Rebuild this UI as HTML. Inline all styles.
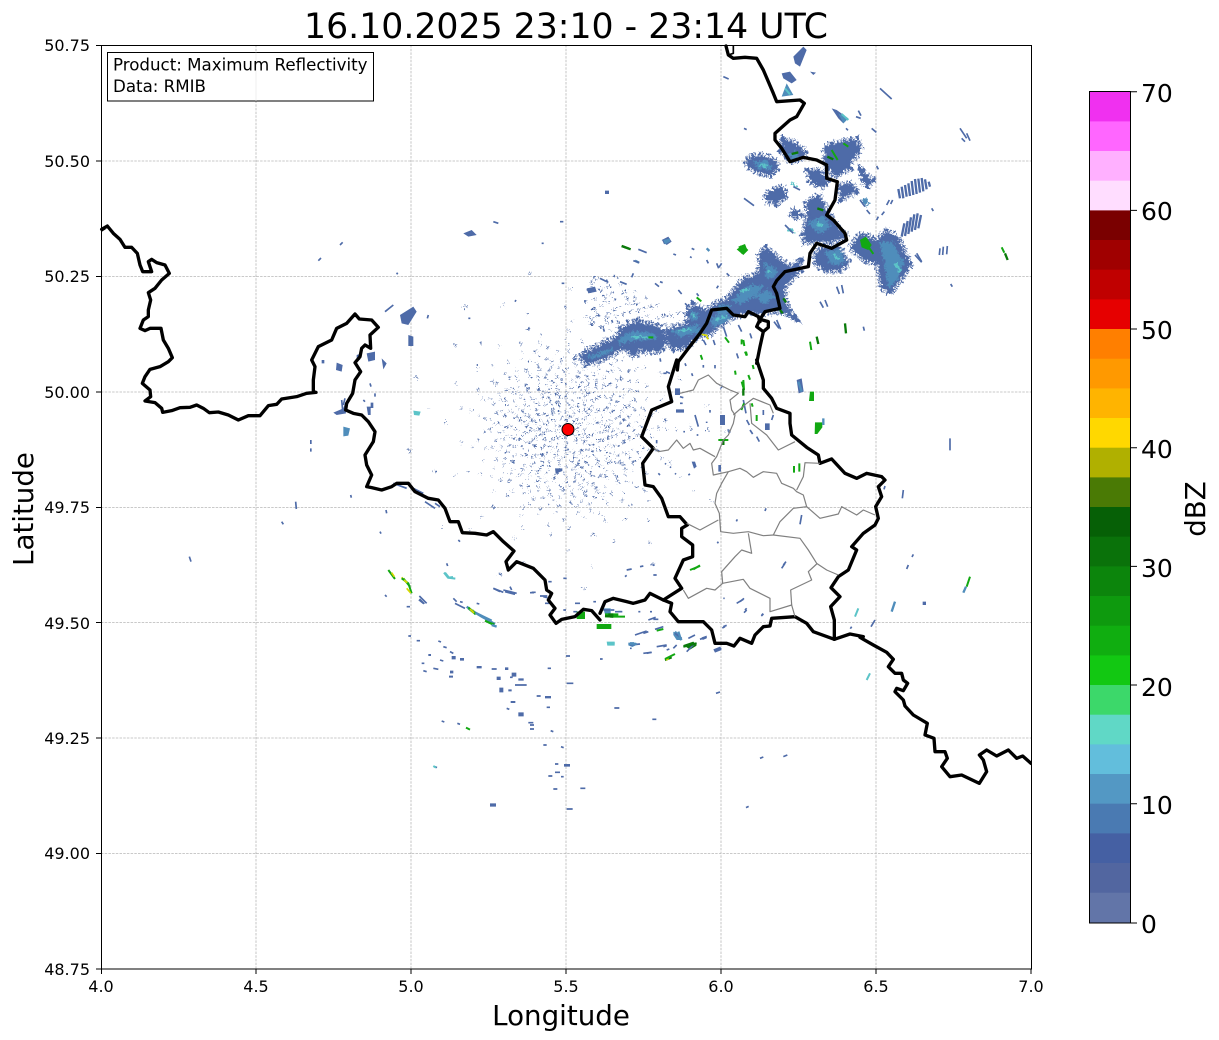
<!DOCTYPE html>
<html><head><meta charset="utf-8"><title>Radar</title>
<style>
html,body{margin:0;padding:0;background:#fff}
svg{display:block}
text{font-family:"DejaVu Sans",sans-serif;fill:#000}
.gr{stroke:#b8b8b8;stroke-width:.8;stroke-dasharray:2.5 1.2;fill:none}
.bd{fill:none;stroke:#000;stroke-width:10;stroke-linejoin:round;stroke-linecap:round}
.pr{fill:none;stroke:#808080;stroke-width:3.6;stroke-linejoin:round}
.b{fill:#4e6ba8}.m{fill:#4f8dbb}.t{fill:#5cc4c8}.g{fill:#12a812}.dg{fill:#0a7a0a}
.bf{fill:#4e6ba8;stroke:#4e6ba8;stroke-width:22;stroke-dasharray:6 4 4 5}
.mf{fill:#4f8dbb;stroke:#4f8dbb;stroke-width:8;stroke-dasharray:4 5}
.sb{fill:none;stroke:#4e6ba8;stroke-width:5}
.st{fill:none;stroke:#5cc4c8;stroke-width:6}
.sm{fill:none;stroke:#4f8dbb;stroke-width:7}
.sg{fill:none;stroke:#12a812;stroke-width:6}
.sd{fill:none;stroke:#0a7a0a;stroke-width:7}
.sy{fill:none;stroke:#d8d800;stroke-width:5}
.c{fill:none;stroke:#4e6ba8;stroke-width:1.8}
</style></head><body>
<svg width="1219" height="1040" viewBox="0 0 1219 1040" xmlns="http://www.w3.org/2000/svg">
<defs>
<clipPath id="sc"><path d="M585 272H700V322L640 330 585 345Z"/></clipPath>
<filter id="j" x="-5%" y="-5%" width="110%" height="110%" color-interpolation-filters="sRGB">
<feTurbulence type="fractalNoise" baseFrequency=".45" numOctaves="2" seed="4" result="n"/>
<feDisplacementMap in="SourceGraphic" in2="n" scale="9" xChannelSelector="R" yChannelSelector="G"/>
</filter>
<filter id="jz" x="-5%" y="-5%" width="110%" height="110%" color-interpolation-filters="sRGB">
<feTurbulence type="fractalNoise" baseFrequency=".13" numOctaves="2" seed="7" result="n"/>
<feDisplacementMap in="SourceGraphic" in2="n" scale="20" xChannelSelector="R" yChannelSelector="G"/>
</filter>
</defs>
<rect width="1219" height="1040" fill="#fff"/>
<text x="566" y="38" font-size="34.7" text-anchor="middle">16.10.2025 23:10 - 23:14 UTC</text>
<!-- grid -->
<path class="gr" d="M256 45V969M411 45V969M566 45V969M721 45V969M876 45V969M101 161H1031M101 276.5H1031M101 392H1031M101 507.5H1031M101 622.5H1031M101 738H1031M101 853.5H1031"/>
<!-- clutter rings -->
<g filter="url(#j)">
<circle class="c" cx="568" cy="429" r="9" stroke-dasharray="2.3 4.1 1.2 7.3 3.1 5.7"/>
<circle class="c" cx="568" cy="429" r="13" stroke-dasharray="3.1 5.3 1.3 3.7 2.2 8.9 1.7 6.1" stroke-dashoffset="3"/>
<circle class="c" cx="568" cy="429" r="17" stroke-dasharray="2.1 6.7 1.4 4.3 3.3 5.9 1.1 9.7" stroke-dashoffset="7"/>
<circle class="c" cx="568" cy="429" r="21" stroke-dasharray="1.2 5.1 3.4 7.7 2.3 4.9 1.6 11.3" stroke-dashoffset="11"/>
<circle class="c" cx="568" cy="429" r="25" stroke-dasharray="2.4 4.7 2.1 8.3 1.3 6.7 3.2 5.3" stroke-dashoffset="2"/>
<circle class="c" cx="568" cy="429" r="29" stroke-dasharray="3.2 6.1 1.1 5.3 2.4 10.7 1.5 4.1" stroke-dashoffset="13"/>
<circle class="c" cx="568" cy="429" r="33" stroke-dasharray="1.3 7.3 2.2 4.7 3.1 9.1 1.9 5.9" stroke-dashoffset="5"/>
<circle class="c" cx="568" cy="429" r="37" stroke-dasharray="2.2 5.3 1.4 8.7 2.1 6.1 4.2 7.9" stroke-dashoffset="17"/>
<circle class="c" cx="568" cy="429" r="41" stroke-dasharray="2.1 8.3 1.2 5.1 3.1 7.3 1.7 12.1" stroke-dashoffset="9"/>
<circle class="c" cx="568" cy="429" r="45" stroke-dasharray="1.1 6.3 2.2 10.9 2.3 5.1 1.4 7.7" stroke-dashoffset="21"/>
<circle class="c" cx="568" cy="429" r="49" stroke-dasharray="2.3 7.1 1.2 9.3 3.1 6.7 1.8 4.9" stroke-dashoffset="4"/>
<circle class="c" cx="568" cy="429" r="53" stroke-dasharray="1.2 8.1 2.3 6.3 1.4 11.1 2.2 7.9" stroke-dashoffset="15"/>
<circle class="c" cx="568" cy="429" r="57" stroke-dasharray="2.1 9.3 1.3 7.1 2.4 12.7 1.2 5.9" stroke-dashoffset="8"/>
<circle class="c" cx="568" cy="429" r="61" stroke-dasharray="1.3 10.1 2.2 8.3 1.1 6.9 3.2 13.3" stroke-dashoffset="23"/>
<circle class="c" cx="568" cy="429" r="65" stroke-dasharray="2.2 11.3 1.4 6.7 1.2 14.1 2.1 8.9" stroke-dashoffset="12"/>
<circle class="c" cx="568" cy="429" r="69" stroke-dasharray="1.4 9.7 2.1 13.1 1.3 7.3 2.2 10.9" stroke-dashoffset="6"/>
<circle class="c" cx="568" cy="429" r="73" stroke-dasharray="2.1 12.3 1.2 8.9 2.3 15.1 1.1 9.7" stroke-dashoffset="19"/>
<circle class="c" cx="568" cy="429" r="78" stroke-dasharray="1.2 13.7 2.2 10.1 1.3 17.3 2.1 8.3" stroke-dashoffset="27"/>
<circle class="c" cx="568" cy="429" r="84" stroke-dasharray="1.3 15.1 2.1 11.3 1.2 19.7" stroke-dashoffset="10"/>
<circle class="c" cx="568" cy="429" r="90" stroke-dasharray="1.2 18.3 2.1 23.9 1.3 15.7"/>
<circle class="c" cx="568" cy="429" r="98" stroke-dasharray="2 27.1 1 35.3 1.5 19.7" stroke-width="1.3"/>
<circle class="c" cx="568" cy="429" r="108" stroke-dasharray="1 33.3 2 41.7 1.2 29.1" stroke-width="1.3"/>
<circle class="c" cx="568" cy="429" r="122" stroke-dasharray="2 47.1 1 53.9 1.5 37.3" stroke-width="1.3"/>
<circle class="c" cx="568" cy="429" r="140" stroke-dasharray="2 61.7 1 67.3" stroke-width="1.3"/>
<circle class="c" cx="568" cy="429" r="160" stroke-dasharray="3 71.1 2 83.9" stroke-width="1.3"/>
</g>
<!-- scatter north of the band -->
<g filter="url(#j)"><g clip-path="url(#sc)" fill="none" stroke="#4e6ba8" stroke-width="1.6">
<circle cx="568" cy="429" r="108" stroke-dasharray="4 7.3 2 11.1 5 6.7"/>
<circle cx="568" cy="429" r="113" stroke-dasharray="3 9.1 5 5.3 2 13.7"/>
<circle cx="568" cy="429" r="118" stroke-dasharray="5 6.3 2 9.7 3 12.9"/>
<circle cx="568" cy="429" r="123" stroke-dasharray="2 8.7 4 11.3 3 5.9"/>
<circle cx="568" cy="429" r="128" stroke-dasharray="4 10.3 3 6.1 2 14.3"/>
<circle cx="568" cy="429" r="133" stroke-dasharray="3 7.9 5 12.1 2 8.3"/>
<circle cx="568" cy="429" r="138" stroke-dasharray="2 11.9 4 7.1 3 9.3"/>
<circle cx="568" cy="429" r="143" stroke-dasharray="4 8.1 2 13.3 3 6.7"/>
<circle cx="568" cy="429" r="148" stroke-dasharray="3 12.7 4 9.1 2 15.3"/>
<circle cx="568" cy="429" r="153" stroke-dasharray="2 14.3 4 8.9 2 11.7"/>
</g></g>
<!-- main band (zoom coords 570,240) -->
<g transform="translate(570 240) scale(.33333)">
<g filter="url(#jz)">
<path class="bf" d="M30 350L70 325 130 300 165 260 200 245 275 265 285 300 275 330 235 335 210 325 195 350 160 320 130 340 90 360 50 370Z"/>
<path class="bf" d="M290 270L360 250 350 215 370 195 410 215 440 190 470 180 520 120 570 100 570 40 590 25 640 70 660 80 690 65 690 90 650 130 640 150 650 200 670 230 620 210 590 220 530 215 470 240 420 280 380 290 350 320 310 325 290 300Z"/>
<path class="mf" d="M150 295L190 275 250 280 260 295 190 300 150 310ZM60 350L130 325 120 335 70 355ZM310 275L380 255 390 275 330 290ZM420 240L470 215 480 235 430 260ZM490 180L540 135 575 140 560 165 510 190ZM585 70L620 90 610 115 590 110ZM445 200L480 195 470 215 440 225ZM560 170L590 150 610 170 585 190Z M365 215L385 225 375 240 360 232Z"/>
<path class="st" d="M180 290L240 292M325 272L365 268M435 240L470 230M510 155L540 145M592 90L605 98M365 225l10 6"/>
</g>
<path class="sb" d="M345 190l10 10M380 160l6 8M190 100l-5 12M255 130l12 10M325 150l10 12M440 145l5 -8M470 100l8 8M410 60l5 10M440 70l6 15M455 70l-8 12M365 25l8 4M310 42l8 3M360 50l5 3M270 125l8 3M50 150l15 -3M90 115l25 12M150 125l20 8M45 180v8M100 265l3 10M125 240l3 8M170 240l3 6M20 355l-10 5M300 400l-12 -5M270 355l2 10M400 300l8 15M430 300l5 15M500 340l5 15M540 280l5 15M612 245l15 20M620 240l12 28M505 255l10 20M460 260l10 30"/>
<path class="sg" d="M235 292h15M380 172l14 12M515 298v15M525 335l5 12M495 392l2 12M515 425l5 18M535 405l5 14M392 345l5 14M548 375l3 12M465 292l12 16"/>
<path class="sy" d="M395 283l18 4M410 290l5 8"/>
<path class="g" d="M505 20L525 12 532 30 515 42Z"/>
<path class="sd" d="M640 175l8 12M630 210l8 10M155 18l22 8"/>
<path class="sm" d="M195 62l12 6M410 25l8 8"/>
<path class="sb" d="M280 8l18 -8" style="stroke-width:10"/>
</g>
<!-- NE blobs (zoom coords 740,130) -->
<g transform="translate(740 130) scale(.33333)">
<g filter="url(#jz)">
<path class="bf" d="M20 90L50 75 90 85 115 110 90 135 50 125 25 110Z M130 30L165 40 200 75 150 95 125 60Z M255 50L310 35 350 30 360 60 330 95 330 115 290 135 265 120 255 90Z M205 125L240 120 265 160 240 170 210 150Z M300 165L335 160 345 185 305 205Z M365 125L395 150 385 165 365 150Z M405 340L440 305 470 320 510 405 480 450 450 490 425 470 415 400 375 390 330 355 365 310 395 325Z M190 315L205 260 200 220 235 195 265 250 290 290 320 320 265 335 225 335 195 335Z M235 360L290 345 325 400 300 420 250 420 220 390Z M100 180L125 170 140 195 110 220 75 210 80 195Z M155 245l15 -5 8 15 -18 8Z"/>
<path class="mf" d="M420 340L455 335 490 400 470 450 445 470 435 400Z M40 100L80 90 95 115 60 115Z M205 280L250 260 270 290 240 310Z M255 365L300 360 315 395 275 405Z M150 75l20 -10 5 15 -15 10Z M365 210l15 -3 5 12 -10 8Z"/>
<path class="st" d="M60 105l22 6M465 400l18 25M230 280l18 8M280 375l18 12M155 158l15 12M145 298l18 8" style="stroke-width:8"/>
</g>
<path class="sb" style="stroke-width:7" d="M480 205l-5 -28M490 205l-5 -35M500 200l-5 -35M510 198l-5 -38M520 195l-5 -42M530 192l-5 -45M540 188l-5 -42M550 184l-5 -40M560 178l-5 -30M570 170l-4 -15M485 320l8 -40M495 318l8 -45M505 312l8 -50M515 305l8 -52M525 300l8 -50M535 295l8 -40"/>
<path class="sb" d="M440 225l8 -15M452 222l6 -12M410 270l5 -10M425 255l8 -10M525 375l20 22M575 235l5 8M360 210l15 20M135 285l25 25M240 515l10 18M255 510l8 20M290 470l8 22M305 465l5 25M380 240l10 12M12 205l30 22M160 170l20 10"/>
<path class="g" d="M360 330L378 320 395 345 385 360 365 352Z"/>
<path class="sd" d="M232 235l18 6M155 72l20 -5M262 80l18 8"/>
<path class="sg" d="M310 40l15 10M385 350l15 22M275 60l18 30M12 352l-12 -2"/>
</g>
<!-- echoes N (zoom 1 coordinates) -->
<g transform="translate(600 40) scale(.33333)">
<path class="b" d="M580 50L610 20 620 30 600 80 585 70Z
M545 100L570 95 590 120 575 130 550 115Z
M695 205L710 210 745 235 730 250 715 235Z
M630 95L648 98 640 105Z
M185 600L205 590 215 605 200 615Z
M15 452h12v10H15Z"/>
<path class="sb" d="M370 110l16 7M840 145l35 32M1080 265l20 30M1100 280l10 22M1085 295l10 10M768 230l14 5M775 212l8 15M1020 625l-2 20M1030 620l-2 25M1042 618l-2 25M950 640l15 25M115 628l25 10M100 662l18 6M1052 732l5 8M830 378l5 10M432 265l8 4M738 265l6 6M815 265l14 12M790 860l3 12"/>
<path class="m" d="M560 130L580 165 545 170Z M715 220L745 235 730 250Z M190 600l20 -5 0 10 -15 8Z"/>
<path class="st" d="M725 222L745 240"/>
<path class="st" d="M555 145l15 18"/>
<path class="sg" d="M1205 622l8 16M630 905l4 25M430 900l3 18M438 935l3 12"/>
<path class="sd" d="M65 618L92 628M1215 640l8 20M735 850l3 30M650 890l5 22"/>
<path class="g" d="M410 628L430 615 445 630 430 645Z"/>
</g>
<!-- echoes West (zoom 2 coordinates) -->
<g transform="translate(100 220) scale(.33333)">
<path class="b" d="M900 285L940 260 950 275 925 315 905 310Z M925 345L940 350 940 378 925 378Z M800 400L825 395 825 420 805 425Z M845 415L860 430 850 448Z M710 428L728 435 725 455 708 450Z M770 405L785 400 780 420 770 415Z M1090 40L1115 30 1130 45 1105 50Z M700 578L730 565 735 550 738 580 710 585Z M630 660h5v12h-5ZM630 685h5v10h-5Z M800 560h12v25h-8Z M812 548h8v16h-8Z M1365 745h22v8l-20 8Z M1460 205l25 -5 5 15 -25 5Z M665 420h8v10h-8Z"/>
<path class="sb" d="M855 275l25 -20M985 285l-3 10M720 75l8 -8M655 122l8 -8M1105 295h6M1130 435h4M1385 190h8M1380 5h10M1180 5l15 5M1325 70h6M890 163l3 -5M1245 245l3 -5M858 870l2 10M752 825l2 8M840 935l3 6M587 845l2 22M545 905l5 8M268 1010l5 15M880 790l40 15M940 805l30 15M975 845l30 20M1005 850l15 10M1180 1105l30 12M1215 1115l30 8M1290 1118l12 0M1330 1130l12 3M958 1128l22 22M1065 1150l30 15M855 1125l5 5M1040 1030l3 8M1075 960l5 5"/>
<path class="sb" d="M725 540l3 30M735 535l-5 20M790 540l5 5M825 520l0 10M810 490l3 10" stroke-width="3"/>
<path class="m" d="M730 620l20 5 -5 22 -15 2Z"/>
<path class="t" d="M940 572l22 3 -4 12 -16 -2Z"/>
<path class="st" d="M1035 1058l12 15 12 -2"/>
<path class="sg" d="M865 1050l20 27M910 1075l20 25"/>
<path class="sy" d="M875 1058l8 12M905 1072l14 15"/>
<path class="sm" d="M1105 1165l40 25 40 22"/>
<path class="sg" d="M1105 1165l22 18M1165 1207l18 6"/>
<path class="sy" d="M1118 1170l6 6"/>
</g>
<!-- echoes South (zoom 6 coordinates) -->
<g transform="translate(400 560) scale(.33333)">
<path class="sb" d="M280 85l20 10M310 90l40 10M395 97h12M420 108h22M435 130h15M490 55h10M445 65h10M525 130h15M520 155h12M490 150h8M580 125h8M625 150h18M655 155h12M730 220l15 -5M760 178h15M715 155h6M750 155h6M25 228h8M50 242h10M115 243l8 3M150 275l10 5M120 300l10 3M100 325l15 3M70 332l10 3M275 327h15M345 375h35M330 352h8M320 445l8 3M385 488h15M390 495h12M390 507h12M452 512l8 3M172 490l8 3M125 483l8 3M500 370h20M498 288h12M443 325h10M643 444h15M757 478h12M600 297h8M948 400l12 -4M430 555h10M483 560l8 3M465 612h10M445 648h12M465 637h15M483 650h8M460 687h12M541 685h15M500 747h18M105 620l6 3M1080 595l10 -4M1150 590l12 -5M1038 743l8 -4M1150 15l8 -10M1020 125l12 -10M1035 150l5 -5M1085 165l5 -4M970 115h4M970 200l10 -4M410 408h12M440 442h10M160 115l10 10M180 125l8 2M230 130l8 2M20 140h10M130 260l10 3M65 310h8M690 265h5M790 260l10 -3M800 270l8 -3M820 265l10 -10M740 280l15 -3M680 30l15 -3M720 20l10 -2M760 45h10M675 50l5 -4M330 80l5 10"/>
<path class="b" d="M85 282h8v6h-8ZM155 288h12v10h-12ZM180 294h12v8h-12ZM230 318h15v7h-15ZM315 322h10v8h-10ZM335 338h14v12h-14ZM290 350h12v10h-12ZM355 355h16v7h-16ZM298 383h12v14h-12ZM325 388h10v6h-10ZM332 423h14v6h-14ZM355 457h16v12h-16ZM435 408h18v7h-18ZM150 332h10v8h-10ZM147 347h12v6h-12ZM492 612h18v8h-18ZM270 730h18v10h-18ZM60 115l15 15 -5 3 -15 -12ZM940 268l20 -8 5 10 -20 8ZM905 232l15 -5 0 8 -12 5Z"/>
<path class="m" d="M685 248h22v8l-10 5 -12 -5Z M820 215l15 10 10 15 -15 0 -10 -15Z M610 145h22v25h-15Z"/>
<path class="t" d="M620 245h24v12h-22Z"/>
<path class="st" d="M132 38l12 15 22 3"/>
<path class="g" d="M590 192h44v15h-44ZM530 155h25v22h-25ZM615 160h40v12h-40Z"/>
<path class="dg" d="M850 255l30 -10 10 12 -20 12ZM625 160h15v10h-15Z"/>
<path class="sd" d="M795 300l20 -8"/>
<path class="sy" d="M798 300l8 -4"/>
<path class="sm" d="M200 140l20 15 30 15 25 12"/>
<path class="sg" d="M205 142l20 18M255 182l25 12M5 55l20 15 10 30M880 28l20 -12M770 212l20 -5"/>
<path class="sy" d="M210 147l12 12M12 60l10 8M20 85l12 14"/>
<path class="sm" d="M275 195l15 5M690 250l12 0M825 215l20 25"/>
<path class="sg" d="M198 503l12 6"/>
<path class="st" d="M100 618l8 5"/>
</g>
<!-- echoes East (zoom 3 coordinates) -->
<g transform="translate(600 360) scale(.33333)">
<path class="b" d="M225 85h15v20h-15ZM228 148h24v10h-24ZM360 165h15v30h-15ZM495 190h14v20h-14ZM590 60l15 -5 6 40 -15 5ZM275 305l10 0 5 15 -8 6ZM355 315h8v20h-8ZM968 725h10v10h-10Z"/>
<path class="sm" d="M595 65l10 30M885 725l-10 30"/>
<path class="st" d="M775 745l-10 25" stroke-width="12"/>
<path class="sb" d="M1050 235v36M910 390l-3 25M855 378l-3 10M940 583l-4 8M925 615l-5 12M825 780l-12 20M755 800l-4 6M605 465l-5 28M498 445l-3 8M412 478l-3 6M355 545l-3 5M555 610l-10 15M430 718l-20 12M440 750l-8 8M375 800l-8 4M490 762l-6 6M285 165l10 35M320 185v4M330 150v8M250 215h5M290 225h5M175 340l5 5M225 340l3 3M265 345l5 -3M210 320l3 3M195 310l3 3M430 120l8 40M440 180l8 15M450 210l8 12M470 230l8 15M490 150v15M520 165l-5 15M255 10l3 8M275 40l3 8M310 15v8M345 15v10M240 110l10 3M240 130h8M190 40h10M170 240v10M170 270l8 3"/>
<path class="sb" d="M320 830l-20 8M350 870l14 -6M90 855l30 -3M105 825l35 -12M130 880l25 -3M165 808l25 -8M225 820l20 15M285 825l-20 10M170 860l30 -5" stroke-width="5"/>
<path class="sb" d="M10 750l20 0M45 755h20M145 780l22 -8M285 850l-25 25" stroke-width="6"/>
<path class="sg" d="M0 800l32 -4M30 770l45 0M355 240l30 0M270 630l30 -12M582 318v20M598 310v25M470 165v18M432 130l-8 20M430 60l2 30M455 130l3 10M195 897l30 -15M1110 650l-10 30"/>
<path class="sd" d="M15 768l25 2M250 860l40 -10M430 85l0 22M370 240l0 15"/>
<path class="g" d="M630 95h12v28h-15ZM645 187h22v15l-15 20h-8Z"/>
<path class="st" d="M22 850h22M810 940l-10 20" />
<path class="sm" d="M90 852h20M235 815l8 25M670 175l0 20"/>
<path class="sm" d="M1098 680l-8 18"/>
</g>
<!-- borders -->
<g transform="translate(100 220) scale(.33333)">
<path class="bd" d="M5 28L22 18 40 40 60 58 75 82 95 82 112 100 120 135 128 155 155 155 145 125 155 118 170 128 195 135 208 160 185 180 165 205 145 218 152 240 145 270 145 290 130 300 120 325 135 332 150 325 183 325 190 360 205 385 217 413 205 425 180 440 150 448 135 470 127 490 150 510 152 530 135 543 165 548 185 565 188 577 215 572 240 563 270 562 290 555 310 565 328 578 355 576 385 585 415 600 445 587 480 587 505 557 530 553 545 537 590 530 620 520 648 517 640 515 640 480 645 440 635 420 655 380 695 360 710 325 740 310 765 282 778 297 815 300 835 322 810 345 812 385 795 375 785 385 780 410 765 428 782 455 765 480 758 520 740 550 737 570 760 580 785 585 805 605 825 635 820 665 795 705 800 735 815 765 800 800 815 803 845 810 875 800 890 790 925 790 945 815 985 835 1015 840 1035 865 1050 905 1075 905 1087 938 1125 940 1160 945 1180 935 1210 965 1242 993 1218 1025 1225 1050 1250 1025 1300 1045 1335 1080 1340 1110 1355 1120 1345 1140 1365 1165 1350 1185 1368 1210 1385 1198 1425 1190 1450 1168 1475 1172 1500 1200"/>
</g>
<path d="M101 230.5L105 228" fill="none" stroke="#000" stroke-width="3"/>
<g transform="translate(600 360) scale(.33333)">
<path class="bd" d="M0 760L15 725 40 715 80 725 100 730 135 720 150 700 190 720 215 730 210 755 235 785 310 785 335 810 345 850 380 850 402 858 420 835 455 850 465 825 490 800 510 798 515 775 585 770 620 790 640 815 703 838 750 822 790 830"/>
<path class="bd" d="M190 720L245 685 225 655 250 600 278 590 278 555 245 530 245 505 262 495 240 470 205 470 185 415 160 380 135 375 128 310 160 265 125 230 155 150 215 125 205 80 230 0"/>
<path class="bd" d="M703 838L703 780 692 740 720 710 693 683 715 650 745 630 770 570 755 560 790 520 825 495 835 475 827 440 845 410 835 380 855 360 845 350 800 340 770 355 735 340 695 297 660 310 655 285 620 262 575 225 570 190 570 160 530 145 515 115 490 85 490 60 470 0"/>
</g>
<!-- SE border (840,620 zoom coords) -->
<g transform="translate(840 620) scale(.33333)">
<path class="bd" d="M60 52L70 58 100 75 140 97 160 118 145 140 165 160 185 160 190 180 203 190 190 212 170 205 165 215 190 240 195 258 220 285 262 310 255 345 282 355 285 395 315 395 322 415 305 440 330 470 365 465 418 490 440 455 430 420 418 405 440 390 470 408 505 390 530 415 548 408 573 430"/>
</g>
<g transform="translate(600 40) scale(.33333)">
<path class="bd" d="M470 970L480 920 490 875 M490 875L470 860 480 838 505 845 505 862 490 875M480 838L495 815 540 805 530 760 520 740 530 722 555 695 625 680 630 640 650 610 695 625 740 600 735 580 700 540 680 525 705 480 712 425 680 415 680 375 650 360 610 352 570 365 545 325 525 300 525 280 570 240 590 230 613 190 600 180 530 185 520 160 490 90 470 55 435 52 400 55 385 45 378 18"/>
<path class="bd" d="M385 45L400 40 400 18" style="stroke-width:5"/>
<path class="bd" d="M232 990L235 965 265 925 300 880 320 850 335 810 380 805 400 825 435 830 445 815 475 830 480 845"/>
</g>
<!-- internal boundaries -->
<g transform="translate(600 360) scale(.33333)">
<path class="pr" d="M240 100L280 90 295 60 325 45 350 70 390 90 415 100 390 120 395 150 405 165 400 190 385 225 370 240 350 290 335 310 340 345 385 335 420 325 440 335 460 352 490 335 530 340 545 370 580 385 590 395 610 405 620 440 580 445 540 485 520 525 600 535 625 570 650 610 680 630 715 645"/>
<path class="pr" d="M160 262L175 275 205 270 230 240 250 265 270 250 280 270 300 265 345 290"/>
<path class="pr" d="M400 165L440 130 460 115 510 135 520 160M450 130L455 190 500 225 535 270 585 245"/>
<path class="pr" d="M660 310L615 308 610 350 590 390"/>
<path class="pr" d="M385 335L365 370 350 400 345 430 358 460 362 515 400 520 445 515 490 527 520 525"/>
<path class="pr" d="M620 440L660 475 715 462 725 440 770 465 790 450 825 465"/>
<path class="pr" d="M260 490L300 510 355 480"/>
<path class="pr" d="M445 520L455 580 425 570 405 590 365 635 368 670 345 690 320 685 265 715 250 690"/>
<path class="pr" d="M368 670L430 658 450 685 510 715 510 755 575 735 585 770"/>
<path class="pr" d="M575 735L572 690 635 660 625 635 650 612"/>
</g>
<!-- radar marker -->
<circle cx="568" cy="429.5" r="6" fill="#f00" stroke="#000" stroke-width="1"/>
<!-- white outside the axes -->
<rect x="1031.5" y="40" width="50" height="935" fill="#fff"/>
<!-- axes frame -->
<rect x="101.5" y="45.5" width="930" height="923.5" fill="none" stroke="#000" stroke-width="1"/>
<path d="M101 45.5H96M101 161H96M101 276.5H96M101 392H96M101 507.5H96M101 622.5H96M101 738H96M101 853.5H96M101 969H96M101.5 969V974M256 969V974M411 969V974M566 969V974M721 969V974M876 969V974M1031 969V974" stroke="#000" stroke-width="1" fill="none"/>
<g font-size="16" text-anchor="end">
<text x="90" y="51">50.75</text><text x="90" y="167">50.50</text><text x="90" y="282">50.25</text><text x="90" y="398">50.00</text><text x="90" y="513">49.75</text><text x="90" y="629">49.50</text><text x="90" y="744">49.25</text><text x="90" y="859">49.00</text><text x="90" y="975">48.75</text>
</g>
<g font-size="16" text-anchor="middle">
<text x="101" y="992">4.0</text><text x="256" y="992">4.5</text><text x="411" y="992">5.0</text><text x="566" y="992">5.5</text><text x="721" y="992">6.0</text><text x="876" y="992">6.5</text><text x="1031" y="992">7.0</text>
</g>
<text x="561" y="1025" font-size="27.7" text-anchor="middle">Longitude</text>
<text transform="translate(33 509) rotate(-90)" font-size="27.7" text-anchor="middle">Latitude</text>
<!-- info box -->
<rect x="107.5" y="52.5" width="266" height="48.5" fill="#fff" stroke="#000" stroke-width="1"/>
<path d="M256 52.5V101" stroke="#e4e4e4" stroke-width=".6"/>
<text x="113" y="70.5" font-size="16.67">Product: Maximum Reflectivity</text>
<text x="113" y="92" font-size="16.67">Data: RMIB</text>
<!-- colorbar -->
<g>
<rect x="1090" y="91.7" width="40" height="30" fill="#f030f0"/>
<rect x="1090" y="121.4" width="40" height="30" fill="#ff66ff"/>
<rect x="1090" y="151" width="40" height="30" fill="#ffb0ff"/>
<rect x="1090" y="180.7" width="40" height="30" fill="#ffddff"/>
<rect x="1090" y="210.4" width="40" height="30" fill="#7a0000"/>
<rect x="1090" y="240" width="40" height="30" fill="#a00000"/>
<rect x="1090" y="269.7" width="40" height="30" fill="#c00000"/>
<rect x="1090" y="299.4" width="40" height="30" fill="#e60000"/>
<rect x="1090" y="329" width="40" height="30" fill="#ff7f00"/>
<rect x="1090" y="358.7" width="40" height="30" fill="#ff9900"/>
<rect x="1090" y="388.4" width="40" height="30" fill="#ffb400"/>
<rect x="1090" y="418" width="40" height="30" fill="#ffd800"/>
<rect x="1090" y="447.7" width="40" height="30" fill="#b0b000"/>
<rect x="1090" y="477.4" width="40" height="30" fill="#4a7a05"/>
<rect x="1090" y="507" width="40" height="30" fill="#066006"/>
<rect x="1090" y="536.7" width="40" height="30" fill="#0a720a"/>
<rect x="1090" y="566.4" width="40" height="30" fill="#0c850c"/>
<rect x="1090" y="596" width="40" height="30" fill="#0e9a0e"/>
<rect x="1090" y="625.7" width="40" height="30" fill="#10ae10"/>
<rect x="1090" y="655.4" width="40" height="30" fill="#12c812"/>
<rect x="1090" y="685" width="40" height="30" fill="#3cd86a"/>
<rect x="1090" y="714.7" width="40" height="30" fill="#60d8c6"/>
<rect x="1090" y="744.4" width="40" height="30" fill="#62bedc"/>
<rect x="1090" y="774" width="40" height="30" fill="#5398c4"/>
<rect x="1090" y="803.7" width="40" height="30" fill="#4a7ab2"/>
<rect x="1090" y="833.4" width="40" height="30" fill="#4560a3"/>
<rect x="1090" y="863" width="40" height="30" fill="#5266a0"/>
<rect x="1090" y="892.7" width="40" height="30.3" fill="#6275a8"/>
</g>
<rect x="1089.5" y="91.5" width="41" height="831.5" fill="none" stroke="#000" stroke-width="1"/>
<path d="M1130 91.7h7M1130 210.4h7M1130 329h7M1130 447.7h7M1130 566.4h7M1130 685h7M1130 803.7h7M1130 923h7" stroke="#000" stroke-width="1" fill="none"/>
<g font-size="25">
<text x="1141" y="102">70</text><text x="1141" y="220">60</text><text x="1141" y="339">50</text><text x="1141" y="458">40</text><text x="1141" y="577">30</text><text x="1141" y="696">20</text><text x="1141" y="814">10</text><text x="1141" y="933">0</text>
</g>
<text transform="translate(1205 509) rotate(-90)" font-size="27.7" text-anchor="middle">dBZ</text>
</svg>
</body></html>
